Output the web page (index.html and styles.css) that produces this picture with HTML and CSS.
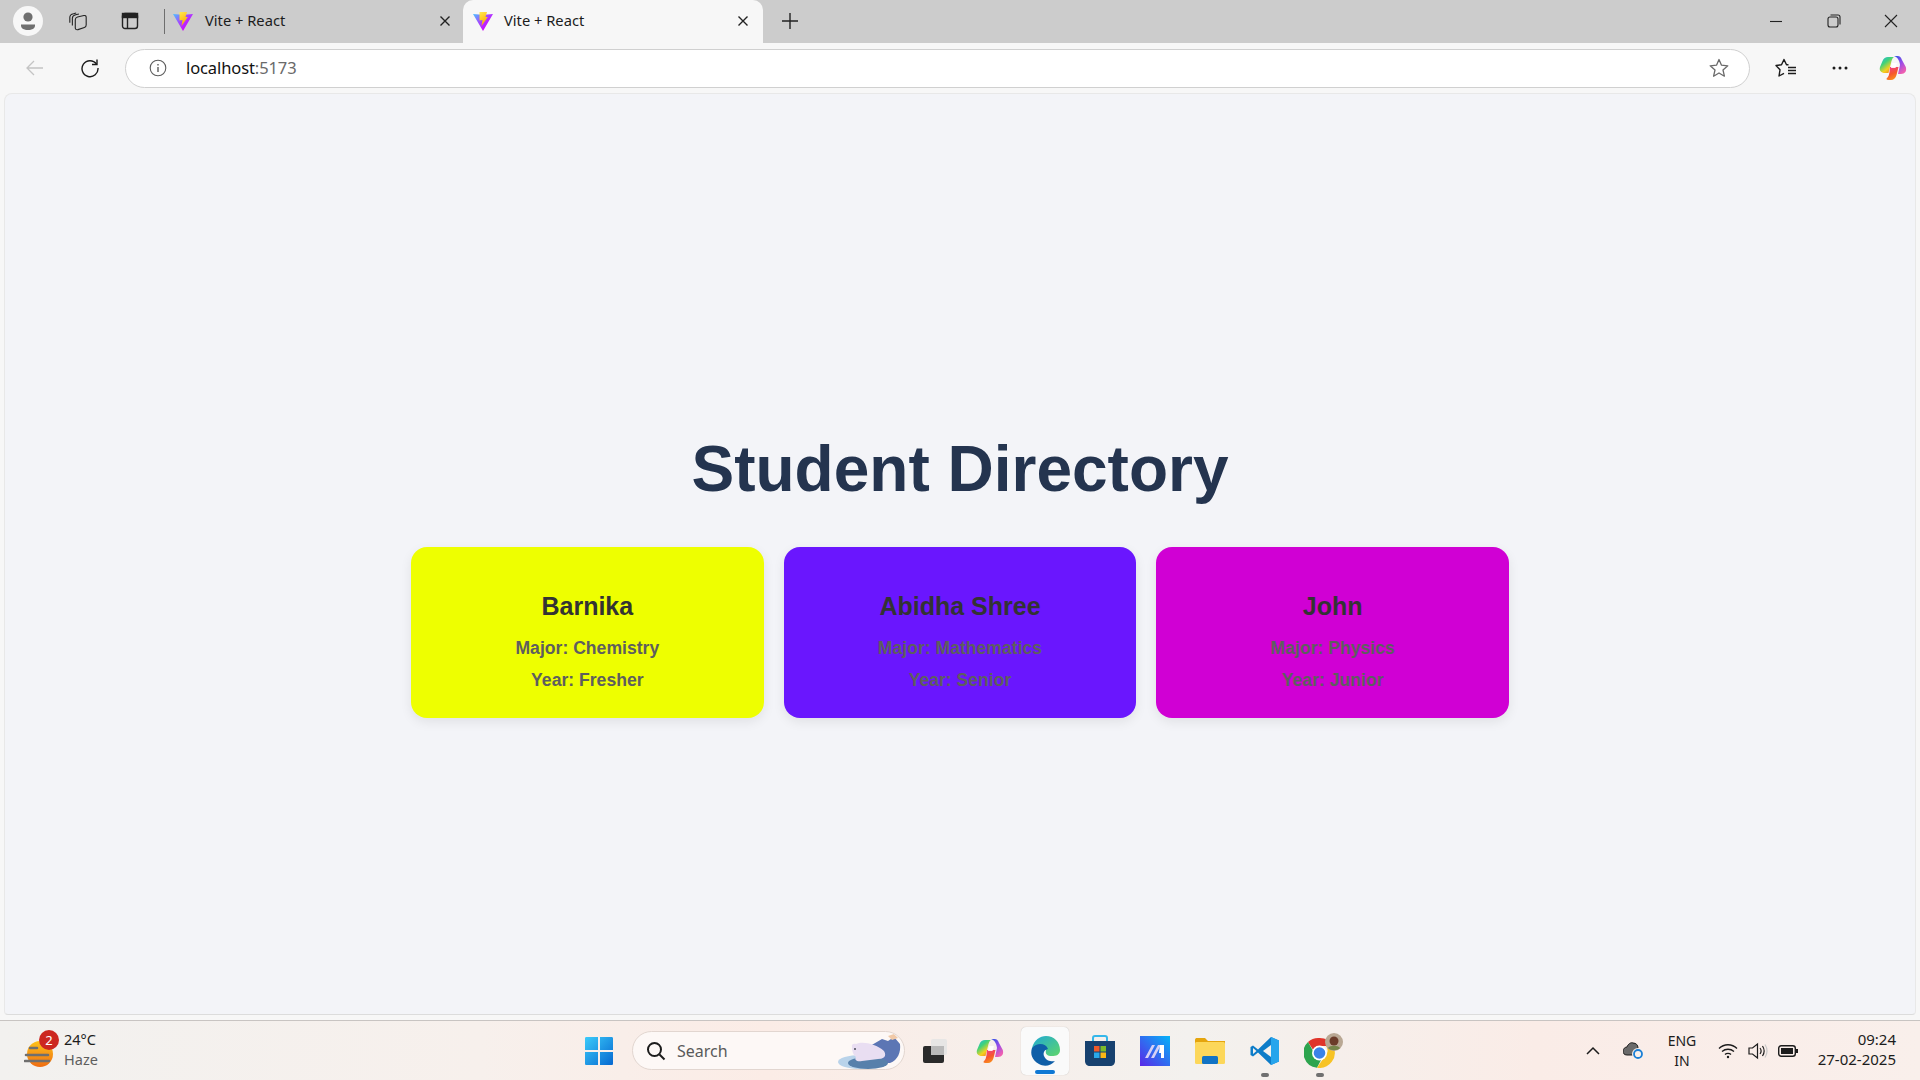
FILE: index.html
```html
<!DOCTYPE html>
<html lang="en">
<head>
<meta charset="utf-8">
<title>Vite + React</title>
<link rel="stylesheet" href="styles.css">
</head>
<body>
<svg class="defs" width="0" height="0">
  <defs>
    <linearGradient id="viteA" x1="0" y1="0.1" x2="0.75" y2="0.75"><stop offset="0" stop-color="#53b8ff"/><stop offset=".45" stop-color="#9a55ff"/><stop offset="1" stop-color="#d400ff"/></linearGradient>
    <linearGradient id="viteB" x1="0" y1="0" x2="0.4" y2="1"><stop offset="0" stop-color="#ffe94f"/><stop offset="1" stop-color="#ffa800"/></linearGradient>
    <symbol id="vite" viewBox="0 0 20 20">
      <path d="M0 3 L6 3.500 L14 3.500 L20 3 L10 20 Z" fill="url(#viteA)"/>
      <path d="M6.500 1 H14 L12.500 6 L14.800 6 L8.500 15 L9.500 9 L6.500 9.500 Z" fill="url(#viteB)"/>
    </symbol>
    <linearGradient id="cop" x1="0" y1="0" x2="0.7" y2="1"><stop offset="0" stop-color="#26b6ea"/><stop offset=".4" stop-color="#3fd27a"/><stop offset=".75" stop-color="#f3d21f"/><stop offset="1" stop-color="#f58a1f"/></linearGradient>
    <linearGradient id="cop2" x1="0" y1="0" x2="0.6" y2="1"><stop offset="0" stop-color="#2d56e6"/><stop offset=".55" stop-color="#9a4ce8"/><stop offset="1" stop-color="#ef5fb0"/></linearGradient>
    <linearGradient id="cop3" x1="0" y1="0" x2="0.4" y2="1"><stop offset="0" stop-color="#f0389a"/><stop offset=".6" stop-color="#f6562e"/><stop offset="1" stop-color="#f98a1e"/></linearGradient>
    <symbol id="copilot" viewBox="0 0 28 28">
      <path d="M9 3 H15 C13.500 4 13 5.500 12.500 7 L9.500 19 H6 C2 19 0 16.500 1 13 L3.500 7 C4.500 4.500 6.500 3 9 3 Z" fill="url(#cop)"/>
      <path d="M15 2 H18.500 C21 2 22 3.500 23 6 L26.800 13 C28 17 26 20 22 20 H19 L21 11 C20.500 6.500 18.500 3 15 2 Z" fill="url(#cop2)"/>
      <path d="M11 13 H19.500 L17.500 21 C16.500 24.500 14.500 26 12 26 H9.500 C7.500 26 7 25 8 24 C9.500 23 10 21 10.500 18 Z" fill="url(#cop3)"/>
      <path d="M13 9 H18 L16.500 14 H12 Z" fill="#ffffff" fill-opacity=".9"/>
    </symbol>
    <linearGradient id="edge1" x1="0" y1="0" x2="1" y2="1"><stop offset="0" stop-color="#1fa9d6"/><stop offset="1" stop-color="#5fd66a"/></linearGradient>
  </defs>
</svg>

<div class="tabstrip">
  <div class="strip-left">
    <span class="avatar"><svg width="30" height="30" viewBox="0 0 30 30"><circle cx="15" cy="15" r="15" fill="#f7f7f7"/><circle cx="15" cy="11" r="4.600" fill="#6f6f6f"/><path d="M8 18.500 H22 V19.500 C22 22.500 19 24 15 24 C11 24 8 22.500 8 19.500 Z" fill="#6f6f6f"/></svg></span>
    <span class="strip-btn"><svg width="22" height="22" viewBox="0 0 22 22" fill="none" stroke="#222" stroke-width="1.200"><path d="M2 13 V7 C2 5 3.500 3.500 6 3 L9 2.200"/><path d="M4.800 16 V8 C4.800 6 6 4.800 8.500 4.200 L12 3.300"/><path d="M8 9.500 C8 8 9 7 10.500 6.600 L17.500 5 C19 4.700 20 5.400 20 7 V15.500 C20 17 19.300 17.800 18 18.200 L11 20.500 C9 21 8 20 8 18.500 Z"/></svg></span>
    <span class="strip-btn"><svg width="18" height="18" viewBox="0 0 18 18" fill="none" stroke="#222" stroke-width="1.400"><rect x="1.500" y="1.500" width="15" height="15" rx="2.500"/><rect x="1.500" y="1.500" width="15" height="4" fill="#222"/><path d="M6.500 5 V16"/></svg></span>
    <span class="strip-sep"></span>
  </div>
  <div class="tab">
    <svg class="fav" width="20" height="20"><use href="#vite"/></svg>
    <span class="tab-title">Vite + React</span>
    <svg class="tab-close" width="12" height="12" viewBox="0 0 12 12" stroke="#222" stroke-width="1.400"><path d="M1.500 1.500 L10.500 10.500 M10.500 1.500 L1.500 10.500"/></svg>
  </div>
  <div class="tab active">
    <svg class="fav" width="20" height="20"><use href="#vite"/></svg>
    <span class="tab-title">Vite + React</span>
    <svg class="tab-close" width="12" height="12" viewBox="0 0 12 12" stroke="#222" stroke-width="1.400"><path d="M1.500 1.500 L10.500 10.500 M10.500 1.500 L1.500 10.500"/></svg>
  </div>
  <span class="new-tab"><svg width="18" height="18" viewBox="0 0 18 18" stroke="#222" stroke-width="1.400"><path d="M9 1 V17 M1 9 H17"/></svg></span>
  <div class="win-controls">
    <svg width="14" height="14" viewBox="0 0 14 14" stroke="#222" stroke-width="1.100"><path d="M1 7.500 H13"/></svg>
    <svg width="14" height="14" viewBox="0 0 14 14" fill="none" stroke="#222" stroke-width="1.100"><rect x="1" y="3" width="10" height="10" rx="2"/><path d="M3.500 1 H11 C12.300 1 13 1.700 13 3 V10.500"/></svg>
    <svg width="14" height="14" viewBox="0 0 14 14" stroke="#222" stroke-width="1.100"><path d="M1 1 L13 13 M13 1 L1 13"/></svg>
  </div>
</div>

<div class="toolbar">
  <span class="tool-btn"><svg width="20" height="18" viewBox="0 0 20 18" fill="none" stroke="#c4c4c4" stroke-width="1.300"><path d="M18 9 H2 M9 2 L2 9 L9 16"/></svg></span>
  <span class="tool-btn"><svg width="20" height="20" viewBox="0 0 20 20" fill="none" stroke="#1c1c1c" stroke-width="1.400"><path d="M16.500 6 A8 8 0 1 0 18 10"/><path d="M17 1.500 V6.500 H12"/></svg></span>
  <div class="address">
    <svg width="18" height="18" viewBox="0 0 18 18" fill="none" stroke="#5c5c5c" stroke-width="1.100"><circle cx="9" cy="9" r="7.800"/><path d="M9 8 V13" stroke-width="1.400"/><path d="M9 5 V6.400" stroke-width="1.400"/></svg>
    <span class="url"><span class="host">localhost</span>:5173</span>
    <svg class="addr-star" width="20" height="20" viewBox="0 0 20 20" fill="none" stroke="#6a6a6a" stroke-width="1.300" stroke-linejoin="round"><path d="M10 1.500 L12.500 7.200 L18.800 7.800 L14 12 L15.400 18.200 L10 15 L4.600 18.200 L6 12 L1.200 7.800 L7.500 7.200 Z"/></svg>
  </div>
  <span class="tool-btn"><svg width="22" height="20" viewBox="0 0 22 20" fill="none" stroke="#1c1c1c" stroke-width="1.400" stroke-linejoin="round"><path d="M13.500 6.800 L11.500 6.800 L9 1.500 L6.500 6.800 L1 7.500 L5 11.800 L4 18 L9 15.300"/><path d="M13 9.500 H21 M13 12.500 H21 M13 15.500 H21" stroke-width="1.300"/></svg></span>
  <span class="tool-btn tool-dots"><svg width="18" height="6" viewBox="0 0 18 6" fill="#1c1c1c"><circle cx="3" cy="3" r="1.500"/><circle cx="9" cy="3" r="1.500"/><circle cx="15" cy="3" r="1.500"/></svg></span>
  <span class="tool-btn tool-copilot"><svg width="28" height="28"><use href="#copilot"/></svg></span>
</div>

<main class="viewport">
  <div class="page">
    <h1 class="heading">Student Directory</h1>
    <div class="cards">
      <section class="card card-yellow"><h2>Barnika</h2><p>Major: Chemistry</p><p>Year: Fresher</p></section>
      <section class="card card-violet"><h2>Abidha Shree</h2><p>Major: Mathematics</p><p>Year: Senior</p></section>
      <section class="card card-magenta"><h2>John</h2><p>Major: Physics</p><p>Year: Junior</p></section>
    </div>
  </div>
</main>

<footer class="taskbar">
  <div class="weather">
    <span class="weather-icon">
      <svg width="34" height="36" viewBox="0 0 34 36"><defs><linearGradient id="sun" x1="0" y1="0" x2="0" y2="1"><stop offset="0" stop-color="#fdc31a"/><stop offset="1" stop-color="#ef6c12"/></linearGradient></defs><circle cx="16" cy="21" r="13" fill="url(#sun)"/><g stroke="#6f6f6f" stroke-width="2.600" stroke-linecap="round"><path d="M6 15 H13 M2 22 H24 M1 28 H25"/></g></svg>
      <span class="badge">2</span>
    </span>
    <span class="weather-text"><span>24°C</span><span class="muted">Haze</span></span>
  </div>
  <div class="task-center">
    <span class="task-icon"><svg width="30" height="30" viewBox="0 0 30 30"><defs><linearGradient id="win" x1="0" y1="0" x2="1" y2="1"><stop offset="0" stop-color="#3bcbfa"/><stop offset="1" stop-color="#0668d0"/></linearGradient></defs><path d="M1 2.500 C1 1.500 1.500 1 2.500 1 H14 V14 H1 Z M16 1 H27.500 C28.500 1 29 1.500 29 2.500 V14 H16 Z M1 16 H14 V29 H2.500 C1.500 29 1 28.500 1 27.500 Z M16 16 H29 V27.500 C29 28.500 28.500 29 27.500 29 H16 Z" fill="url(#win)"/></svg></span>
    <div class="search">
      <svg width="20" height="20" viewBox="0 0 20 20" fill="none" stroke="#1c1c1c" stroke-width="2"><circle cx="8.500" cy="8.500" r="6.500"/><path d="M13.500 13.500 L18.500 18.500"/></svg>
      <span class="search-text">Search</span>
      <svg class="search-art" width="64" height="38" viewBox="0 0 64 38"><path d="M32 14 L44 7 L50 9 L56 5 L62 12 C63 20 60 28 52 31 H32 Z" fill="#5c76b4"/><path d="M50 4 L56 2 L60 6 L54 8 Z" fill="#f0c9a8"/><ellipse cx="23" cy="30" rx="23" ry="7" fill="#b9d3ea"/><ellipse cx="30" cy="31" rx="20" ry="6" fill="#5780ab"/><path d="M14 15 C13 12 16 11 18 12 C25 9 38 12 46 19 C49 24 46 27 40 27 L24 29 C19 30 16 28 18 25 C15 23 14 19 14 15 Z" fill="#e9def2"/><circle cx="17" cy="17" r="1" fill="#4a4a5a"/></svg>
    </div>
    <span class="task-icon"><svg width="26" height="26" viewBox="0 0 26 26"><rect x="1" y="8" width="21" height="17" rx="2" fill="#2a2a2a"/><rect x="9" y="1" width="16" height="16" rx="2" fill="#e4e4e4" fill-opacity=".9"/><rect x="9" y="8" width="13" height="9" fill="#b9b9b9"/></svg></span>
    <span class="task-icon"><svg width="28" height="28"><use href="#copilot"/></svg></span>
    <span class="task-icon current">
      <svg width="32" height="32" viewBox="0 0 32 32"><path d="M3 13 C5 5 11 1 17 1 C25 1 31 7 31 15 C31 20 27 21 23 21 C18 21 16 19 17 15 C14 13 8 10 3 13 Z" fill="url(#edge1)"/><path d="M3 13 C8 7 17 8 19 14 C15 15 14 18 15 21 C17 26 23 27 26 26 C22 31 15 32 10 29 C3 25 1 19 3 13 Z" fill="#0f5fa8"/></svg>
      <span class="run-bar"></span>
    </span>
    <span class="task-icon"><svg width="30" height="32" viewBox="0 0 30 32"><path d="M8 8 V3 C8 2 9 1 10 1 H20 C21 1 22 2 22 3 V8" fill="none" stroke="#35b7ea" stroke-width="2"/><path d="M0 6 H30 V26 C30 29 28 31 25 31 H5 C2 31 0 29 0 26 Z" fill="#17416f"/><rect x="9" y="11" width="5.500" height="5.500" fill="#ef5a2a"/><rect x="15.500" y="11" width="5.500" height="5.500" fill="#7cbb2a"/><rect x="9" y="17.500" width="5.500" height="5.500" fill="#29a8ea"/><rect x="15.500" y="17.500" width="5.500" height="5.500" fill="#fcb714"/></svg></span>
    <span class="task-icon"><svg width="30" height="30" viewBox="0 0 30 30"><defs><linearGradient id="ma" x1="0" y1="1" x2="1" y2="0"><stop offset="0" stop-color="#5a27e8"/><stop offset="1" stop-color="#05b4f8"/></linearGradient></defs><rect width="30" height="30" fill="url(#ma)"/><path d="M5 22 L12 9 H15 L8 22 Z M11 22 L18 9 H21 L14 22 Z" fill="#d6d0f5"/><path d="M20 9 H24 V22 H21 V17 H19 Z" fill="#fff"/></svg></span>
    <span class="task-icon"><svg width="30" height="28" viewBox="0 0 30 28"><path d="M0 3 C0 1.500 1 1 2 1 H10 L13 4 H30 V8 H0 Z" fill="#e5a50d"/><rect y="5" width="30" height="22" rx="1.500" fill="#fcd75a"/><rect x="7" y="19" width="16" height="8" rx="1.500" fill="#1173c4"/></svg></span>
    <span class="task-icon"><svg width="30" height="30" viewBox="0 0 30 30"><path d="M21 1 L29 4.500 V25.500 L21 29 L8 16.500 L3 20.500 L0.500 19 V11 L3 9.500 L8 13.500 Z" fill="#0d7cc8"/><path d="M21 1 L29 4.500 V25.500 L21 29 Z" fill="#27a5ec"/><path d="M21 9 V21 L13 15 Z" fill="#f4f1ee"/><path d="M3 12 L6.500 15 L3 18 Z" fill="#f4f1ee"/></svg><span class="run-dot"></span></span>
    <span class="task-icon"><svg class="chrome" width="40" height="36" viewBox="0 0 40 36"><path d="M15.500 5 A15 15 0 0 1 29 13 H16 A7 7 0 0 0 9.200 17 L4 9 A15 15 0 0 1 15.500 5 Z" fill="#e0342a"/><path d="M4 9 L10.500 20.500 A7 7 0 0 0 17 27 L13 34.700 A15 15 0 0 1 4 9 Z" fill="#2da44e"/><path d="M29 13 A15 15 0 0 1 13 34.700 L21 23 A7 7 0 0 0 22 13 Z" fill="#f7c325"/><circle cx="15.500" cy="20" r="7.500" fill="#fff"/><circle cx="15.500" cy="20" r="5.800" fill="#3b82e8"/><circle cx="30" cy="9" r="9" fill="#b9a894"/><circle cx="30" cy="8" r="4.500" fill="#6b3c2a"/><path d="M24 15 C26 12 34 12 36 15 C34 18 26 18 24 15 Z" fill="#75864a"/></svg><span class="run-dot"></span></span>
  </div>
  <div class="tray">
    <svg width="16" height="10" viewBox="0 0 16 10" fill="none" stroke="#1c1c1c" stroke-width="1.500"><path d="M2 8 L8 2 L14 8"/></svg>
    <svg class="tray-cloud" width="22" height="20" viewBox="0 0 22 20"><path d="M4 14 C1 14 0 12 0 10 C0 8 2 6 4 6 C5 3 8 1 10 2 C13 2 15 4 15 7 L12 14 Z" fill="#6a6a6a" stroke="#1c1c1c" stroke-width="1"/><circle cx="15" cy="13" r="6" fill="#f8f0ec"/><circle cx="15" cy="13" r="4" fill="none" stroke="#1a7fd6" stroke-width="1.800"/></svg>
    <span class="lang"><span>ENG</span><span>IN</span></span>
    <div class="tray-icons">
      <svg width="20" height="16" viewBox="0 0 20 16" fill="none" stroke="#1c1c1c" stroke-width="1.300"><path d="M1 5.500 C6 0.500 14 0.500 19 5.500 M4 8.500 C7.500 5.500 12.500 5.500 16 8.500 M7 11.500 C8.500 10 11.500 10 13 11.500"/><circle cx="10" cy="14" r="1.200" fill="#1c1c1c" stroke="none"/></svg>
      <svg width="20" height="18" viewBox="0 0 20 18" fill="none" stroke="#1c1c1c" stroke-width="1.200"><path d="M1 6 H4.500 L9.500 2 V16 L4.500 12 H1 Z"/><path d="M12 6 C13.500 8 13.500 10 12 12 M14.500 4 C16.500 7 16.500 11 14.500 14"/><path d="M17 2.500 C19.500 6.500 19.500 11.500 17 15.500" stroke="#c8c8c8"/></svg>
      <svg width="20" height="14" viewBox="0 0 20 14"><rect x="0.700" y="1.700" width="16.600" height="10.600" rx="2.500" fill="none" stroke="#1c1c1c" stroke-width="1.400"/><rect x="3" y="4" width="12" height="6" fill="#1c1c1c"/><rect x="18" y="5" width="2" height="4" fill="#1c1c1c"/></svg>
    </div>
    <span class="clock"><span>09:24</span><span>27-02-2025</span></span>
  </div>
</footer>
</body>
</html>
```

FILE: styles.css
```css
* { box-sizing: border-box; }

html, body {
  margin: 0;
  height: 100%;
}

body {
  width: 1920px;
  height: 1080px;
  overflow: hidden;
  display: flex;
  flex-direction: column;
  background: #f7f7f7;
  font-family: "Liberation Sans", Arial, sans-serif;
}

.defs { position: absolute; }

/* Tab strip */
.tabstrip {
  height: 43px;
  flex: none;
  display: flex;
  align-items: stretch;
  background: #cccccc;
}

.strip-left {
  width: 167px;
  flex: none;
  display: flex;
  align-items: center;
  padding: 0 0 1px 13px;
}

.avatar { display: flex; width: 30px; height: 30px; }

.strip-btn {
  width: 20px;
  display: flex;
  justify-content: center;
}

.avatar + .strip-btn { margin-left: 25px; }
.strip-btn + .strip-btn { margin-left: 32px; }

.strip-sep {
  width: 1px;
  height: 25px;
  margin-left: 24px;
  background: #6e6e6e;
}

.tab {
  width: 296px;
  flex: none;
  display: flex;
  align-items: center;
  padding: 0 3px 1px 6px;
}

.tab.active {
  width: 300px;
  padding: 0 5px 1px 10px;
  background: #f7f7f7;
  border-radius: 10px 10px 0 0;
}

.fav { flex: none; }

.tab-title {
  flex: 1;
  margin-left: 12px;
  margin-bottom: 2px;
  font-family: "Noto Sans", sans-serif;
  font-size: 14.700px;
  color: #1c1c1c;
}

.tab.active .tab-title { margin-left: 11px; }

.tab-close { flex: none; margin-right: 9px; }

.new-tab {
  margin-left: 18px;
  padding-bottom: 2px;
  display: flex;
  align-items: center;
}

.win-controls {
  margin-left: auto;
  width: 172px;
  padding: 0 22px 2px 21px;
  display: flex;
  align-items: center;
  justify-content: space-between;
}

/* Toolbar */
.toolbar {
  height: 50px;
  flex: none;
  display: flex;
  align-items: center;
  padding: 0 0 0 13px;
  background: #f7f7f7;
}

.tool-btn {
  width: 44px;
  height: 36px;
  flex: none;
  display: flex;
  align-items: center;
  justify-content: center;
}

.tool-btn:nth-child(2) { margin-left: 11px; }

.tool-dots { margin-left: 10px; }

.tool-copilot { margin-left: 9px; }

.address {
  width: 1625px;
  height: 39px;
  margin: 0 14px 0 13px;
  flex: none;
  display: flex;
  align-items: center;
  padding: 0 20px 0 23px;
  background: #ffffff;
  border: 1px solid #d0d0d0;
  border-radius: 20px;
}

.url {
  margin-left: 19px;
  margin-bottom: 2px;
  font-family: "Noto Sans", sans-serif;
  font-size: 16.500px;
  letter-spacing: -0.1px;
  color: #6a6a6a;
}

.host { color: #111111; }

.addr-star { margin-left: auto; }

/* Page viewport */
.viewport {
  flex: 1;
  margin: 0 4px;
  display: flex;
  justify-content: center;
  align-items: center;
  padding-top: 43px;
  background: #f3f4f8;
  border: 1px solid #e8e8e8;
  border-bottom-color: #dcdcdc;
  border-radius: 8px 8px 4px 4px;
}

.page {
  width: 1098px;
  display: flex;
  flex-direction: column;
  align-items: stretch;
}

.heading {
  margin: 0 0 42px;
  text-align: center;
  font-size: 64px;
  line-height: 72px;
  font-weight: 700;
  color: #24344f;
}

.cards {
  display: grid;
  grid-template-columns: repeat(3, 1fr);
  gap: 20px;
}

.card {
  height: 171px;
  padding: 44px 16px 0;
  text-align: center;
  border-radius: 16px;
  box-shadow: 0 4px 12px rgba(0, 0, 0, 0.08);
}

.card-yellow { background: #eeff00; }
.card-violet { background: #6a16fe; }
.card-magenta { background: #d000d4; }

.card h2 {
  margin: 0 0 10px;
  font-size: 25px;
  line-height: 31px;
  font-weight: 700;
  color: #333333;
}

.card p {
  margin: 0;
  font-size: 17.600px;
  line-height: 32px;
  font-weight: 700;
  color: #5e5e5e;
}

/* Taskbar */
.taskbar {
  height: 60px;
  margin-top: 5px;
  flex: none;
  position: relative;
  display: flex;
  align-items: center;
  background: linear-gradient(90deg, #f2f1ef 0%, #f7f0ec 25%, #fbece6 40%, #f3f1ee 62%, #faece7 80%, #f9efeb 100%);
  border-top: 1px solid #c8c4c2;
}

.weather {
  width: 500px;
  flex: none;
  display: flex;
  align-items: center;
  padding-left: 24px;
}

.weather-icon { position: relative; display: flex; width: 40px; }

.badge {
  position: absolute;
  left: 15px;
  top: -3px;
  width: 20px;
  height: 20px;
  border-radius: 50%;
  background: #cc2720;
  color: #fff;
  font-family: "Noto Sans", sans-serif;
  font-size: 13px;
  line-height: 20px;
  text-align: center;
}

.weather-text {
  display: flex;
  flex-direction: column;
  margin-bottom: 4px;
  font-family: "Noto Sans", sans-serif;
  font-size: 14.500px;
  line-height: 20px;
  color: #1c1c1c;
}

.muted { color: #5e5e5e; }

.task-center {
  width: 1050px;
  flex: none;
  display: flex;
  align-items: center;
  padding-left: 75px;
  height: 100%;
}

.task-icon {
  position: relative;
  width: 48px;
  height: 48px;
  flex: none;
  display: flex;
  align-items: center;
  justify-content: center;
  margin-right: 7px;
}

.task-icon.current {
  background: #fafafa;
  border-radius: 5px;
  box-shadow: 0 0 1px rgba(0, 0, 0, 0.25);
}

.chrome { margin-left: 8px; flex: none; }

.run-bar {
  position: absolute;
  left: 14px;
  bottom: 1px;
  width: 20px;
  height: 4px;
  border-radius: 2px;
  background: #0f78d4;
}

.run-dot {
  position: absolute;
  left: 20px;
  bottom: -2px;
  width: 8px;
  height: 4px;
  border-radius: 2px;
  background: #707070;
}

.search {
  width: 273px;
  height: 39px;
  flex: none;
  margin: 0 6px 0 2px;
  position: relative;
  display: flex;
  align-items: center;
  padding-left: 13px;
  background: #fdf8f6;
  border: 1px solid #e2d6d0;
  border-radius: 20px;
  overflow: hidden;
}

.search-text {
  margin-left: 11px;
  font-family: "Noto Sans", sans-serif;
  font-size: 16px;
  color: #5a5a5a;
}

.search-art { position: absolute; right: 2px; top: 0; }

.tray {
  flex: 1;
  display: flex;
  align-items: center;
  padding: 0 24px 0 35px;
  font-family: "Noto Sans", sans-serif;
  color: #1c1c1c;
}

.tray-cloud { margin-left: 22px; }

.lang {
  width: 40px;
  margin-left: 17px;
  display: flex;
  flex-direction: column;
  align-items: center;
  font-size: 14px;
  line-height: 20px;
}

.tray-icons {
  margin-left: 16px;
  display: flex;
  align-items: center;
  gap: 10px;
}

.clock {
  margin-left: auto;
  margin-bottom: 4px;
  display: flex;
  flex-direction: column;
  align-items: flex-end;
  font-size: 15px;
  line-height: 20px;
}
```
